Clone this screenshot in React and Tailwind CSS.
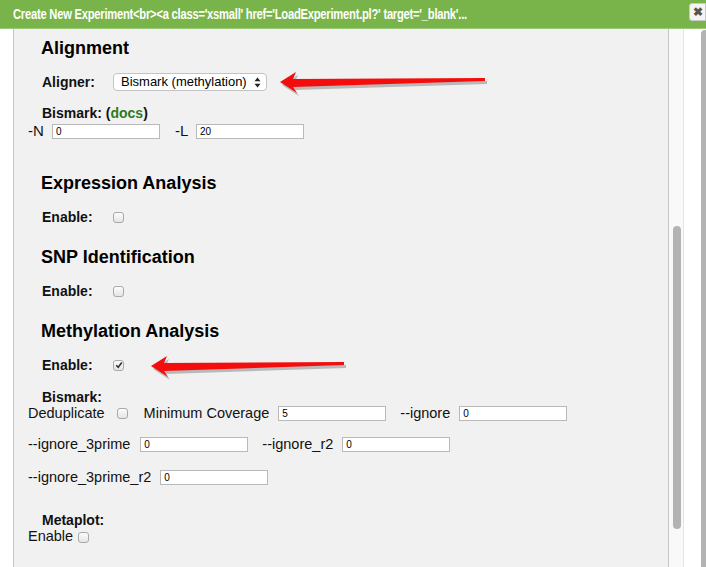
import React from 'react';

const font = { fontFamily: '"Liberation Sans", Arial, sans-serif' };

const Checkbox = ({ checked }) => (
  <span className="inline-flex h-[11px] w-[11px] items-center justify-center rounded-[3px] border border-[#a9a9a9] bg-gradient-to-b from-[#fdfdfd] to-[#e4e4e4]">
    {checked && (
      <svg width="8" height="8" viewBox="0 0 8 8">
        <path d="M1.2 4.2 L3.2 6.2 L6.8 1.4" fill="none" stroke="#333" strokeWidth="1.6" />
      </svg>
    )}
  </span>
);

const TextBox = ({ value, className = '' }) => (
  <span className={`inline-flex h-[15px] w-[108px] items-center border border-[#b9b9b9] bg-white pl-[3px] text-[10px] text-black ${className}`}>
    {value}
  </span>
);

const Heading = ({ children, className = '' }) => (
  <div className={`ml-[13px] h-[20px] text-[18px] font-bold leading-[20px] text-black ${className}`}>{children}</div>
);

const BoldRow = ({ label, children, className = '' }) => (
  <div className={`ml-[14px] flex h-[16px] items-center ${className}`}>
    <span className="w-[71px] text-[14px] font-bold leading-[16px] text-[#111]">{label}</span>
    {children}
  </div>
);

const Arrow = ({ className, length }) => (
  <svg className={`absolute ${className}`} width={length + 8} height="28" viewBox={`0 0 ${length + 8} 28`}>
    <g transform="translate(2,3)" fill="#8a8a8a" opacity="0.55">
      <polygon points={`0,11 16,1 13,8 ${length},7 ${length},10 13,16 17,22`} />
    </g>
    <polygon points={`0,11 16,1 13,8 ${length},7 ${length},10 13,16 17,22`} fill="#f30d0d" />
  </svg>
);

export default function App() {
  return (
    <div className="relative h-[567px] w-[706px] overflow-hidden bg-white" style={font}>
      {/* title bar */}
      <div className="flex h-[29px] items-center border-b border-[#9cc97c] bg-[#78b449] pl-[13px]">
        <span className="origin-left scale-x-[0.8] whitespace-nowrap text-[14px] font-bold tracking-[-0.3px] text-white">
          Create New Experiment&lt;br&gt;&lt;a class='xsmall' href='LoadExperiment.pl?' target='_blank'...
        </span>
      </div>
      <div className="absolute right-0 top-[3px] flex h-[18px] w-[17px] items-center justify-center rounded-l-[3px] border border-[#c9c9c9] bg-[#f4f4f4] text-[12px] font-bold text-[#555]">
        ✖
      </div>

      <div className="flex h-[538px]">
        <div className="w-[13px] bg-white" />
        {/* panel */}
        <div className="w-[656px] border-x border-[#c6c6c6] bg-[#f1f1f1] pl-[14px] text-[#111]">
          <Heading className="mt-[9px]">Alignment</Heading>

          <BoldRow label="Aligner:" className="mt-[15px] h-[18px]">
            <span className="flex h-[18px] w-[154px] items-center justify-between rounded-[4px] border border-[#c3c3c3] bg-white pl-[7px] pr-[5px] text-[13px] text-black">
              Bismark (methylation)
              <svg width="7" height="11" viewBox="0 0 7 11">
                <path d="M3.5 0.5 L6.5 4.3 L0.5 4.3 Z M3.5 10.5 L6.5 6.7 L0.5 6.7 Z" fill="#222" />
              </svg>
            </span>
          </BoldRow>

          <div className="ml-[14px] mt-[14px] h-[16px] text-[14px] font-bold leading-[16px]">
            Bismark: (<span className="text-[#2f7a1b]">docs</span>)
          </div>
          <div className="mt-[3px] flex h-[15px] items-center text-[15px]">
            <span className="w-[24px]">-N</span>
            <TextBox value="0" />
            <span className="ml-[15px] w-[21px]">-L</span>
            <TextBox value="20" />
          </div>

          <Heading className="mt-[34px]">Expression Analysis</Heading>
          <BoldRow label="Enable:" className="mt-[16px]">
            <Checkbox />
          </BoldRow>

          <Heading className="mt-[22px]">SNP Identification</Heading>
          <BoldRow label="Enable:" className="mt-[16px]">
            <Checkbox />
          </BoldRow>

          <Heading className="mt-[22px]">Methylation Analysis</Heading>
          <BoldRow label="Enable:" className="mt-[16px]">
            <Checkbox checked />
          </BoldRow>

          <div className="ml-[14px] mt-[16px] h-[16px] text-[14px] font-bold leading-[16px]">Bismark:</div>
          <div className="mt-[1px] flex h-[15px] items-center text-[14.5px]">
            <span>Deduplicate</span>
            <span className="ml-[12px] flex"><Checkbox /></span>
            <span className="ml-[16px]">Minimum Coverage</span>
            <TextBox value="5" className="ml-[9px]" />
            <span className="ml-[14px]">--ignore</span>
            <TextBox value="0" className="ml-[9px]" />
          </div>
          <div className="mt-[16px] flex h-[15px] items-center text-[14.5px]">
            <span>--ignore_3prime</span>
            <TextBox value="0" className="ml-[10px]" />
            <span className="ml-[14px]">--ignore_r2</span>
            <TextBox value="0" className="ml-[9px]" />
          </div>
          <div className="mt-[18px] flex h-[15px] items-center text-[14.5px]">
            <span>--ignore_3prime_r2</span>
            <TextBox value="0" className="ml-[9px]" />
          </div>

          <div className="ml-[14px] mt-[27px] h-[16px] text-[14px] font-bold leading-[16px]">Metaplot:</div>
          <div className="mt-[1px] flex h-[16px] items-center text-[14.5px]">
            <span>Enable</span>
            <span className="ml-[5px] flex"><Checkbox /></span>
          </div>
        </div>
        {/* inner scrollbar */}
        <div className="relative w-[15px] border-r border-[#e4e4e4] bg-[#f9f9f9]">
          <div className="absolute left-[4px] top-[197px] h-[303px] w-[8px] rounded-full bg-[#b3b3b3]" />
        </div>
        <div className="w-[17px] bg-white" />
        <div className="mt-[1px] w-[5px] rounded-tl-[4px] bg-[#b3b3b3]" />
      </div>

      {/* annotation arrows */}
      <Arrow className="left-[280px] top-[71px]" length={205} />
      <Arrow className="left-[151px] top-[355px]" length={193} />
    </div>
  );
}
